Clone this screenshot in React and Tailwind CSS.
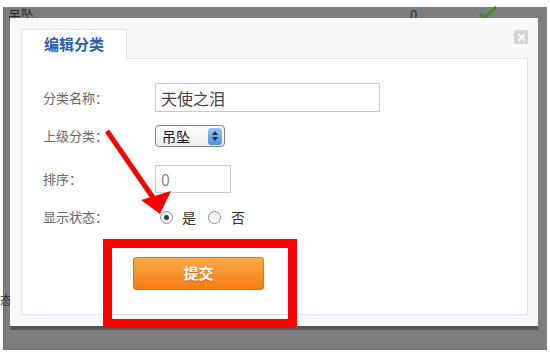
import React from 'react';

const font = { fontFamily: '"Noto Sans CJK SC", "Liberation Sans", sans-serif' };

function Radio({ checked }) {
  return (
    <span className="w-[13px] h-[13px] rounded-full border border-[#8a8f96] bg-gradient-to-b from-[#e9edf2] to-[#ffffff] flex items-center justify-center">
      {checked && <span className="w-[5px] h-[5px] rounded-full bg-[#1e3a5c]" />}
    </span>
  );
}

export default function App() {
  return (
    <div className="relative w-[550px] h-[357px] bg-white overflow-hidden" style={font}>
      {/* page behind the dialog */}
      <div className="h-[7px]" />
      <div className="ml-[3px] mr-[3px] h-[343px] bg-[#7d7d7d] border-l border-[#6a6a6a]">
        <div className="flex items-center h-[14px] text-[13px] leading-none text-[#2a2a2a]">
          <span className="ml-[4px]">吊坠</span>
          <span className="ml-[376px]">0</span>
          <svg className="ml-[62px] -mt-[2px]" width="18" height="14" viewBox="0 0 18 14">
            <path d="M1 8 L6 12 L17 1" fill="none" stroke="#3f8a1c" strokeWidth="3" />
          </svg>
        </div>
        <div className="mt-[273px] -ml-[4px] text-[12px] leading-none text-[#2a2a2a]">态</div>
      </div>

      {/* dialog */}
      <div className="absolute left-[10px] top-[18px] w-[528px] h-[312px] border-b-4 border-[#545454]">
        <div className="h-[308px] bg-[#f6f8f9] p-[11px] pr-[10px]">
          <div className="h-full flex flex-col bg-white border-l border-r border-b border-[#dbe3e6]">
            <div className="flex h-[30px]">
              <div className="w-[106px] -ml-px border-t border-l border-r border-[#dbe3e6] bg-white flex items-center justify-center text-[15px] font-bold text-[#2d5fa8]">
                编辑分类
              </div>
              <div className="flex-1 border-b border-[#dbe3e6] flex justify-end items-start bg-[#f6f8f9] -mr-px">
                <div className="w-[14px] h-[14px] mt-px bg-[#d6d6d6] flex items-center justify-center">
                  <svg width="9" height="9" viewBox="0 0 9 9">
                    <path d="M1.5 1.5 L7.5 7.5 M7.5 1.5 L1.5 7.5" stroke="#ffffff" strokeWidth="2.2" />
                  </svg>
                </div>
              </div>
            </div>

            <div className="pl-[21px] text-[13px] text-[#666]">
              <div className="flex items-center mt-[24px] h-[29px]">
                <span className="w-[112px]">分类名称：</span>
                <div className="w-[225px] h-[29px] border border-[#c9c9c9] flex items-center pl-[5px] text-[16px] text-[#444]">
                  天使之泪
                </div>
              </div>
              <div className="flex items-center mt-[13px] h-[22px]">
                <span className="w-[112px]">上级分类：</span>
                <div className="w-[70px] h-[22px] rounded-[4px] border border-[#7f7f7f] bg-gradient-to-b from-white to-[#eeeeee] flex items-center justify-between pl-[6px] pr-[2px] text-[14px] text-[#111]">
                  吊坠
                  <span className="w-[14px] h-[17px] rounded-[3px] bg-gradient-to-b from-[#9cc4f2] to-[#4c8ee0] flex flex-col items-center justify-center gap-[2px]">
                    <span className="w-0 h-0 border-l-[3px] border-r-[3px] border-b-[4px] border-l-transparent border-r-transparent border-b-[#1a2a44]" />
                    <span className="w-0 h-0 border-l-[3px] border-r-[3px] border-t-[4px] border-l-transparent border-r-transparent border-t-[#1a2a44]" />
                  </span>
                </div>
              </div>
              <div className="flex items-center mt-[18px] h-[28px]">
                <span className="w-[112px]">排序：</span>
                <div className="w-[76px] h-[28px] border border-[#c9c9c9] flex items-center pl-[5px] text-[16px] text-[#888]">
                  0
                </div>
              </div>
              <div className="flex items-center mt-[16px] h-[16px]">
                <span className="w-[117px]">显示状态：</span>
                <Radio checked />
                <span className="ml-[9px] text-[14px] text-[#333]">是</span>
                <span className="ml-[12px]"><Radio /></span>
                <span className="ml-[10px] text-[14px] text-[#333]">否</span>
              </div>
              <div className="mt-[32px] ml-[90px] w-[131px] h-[33px] rounded-[3px] border border-[#e07414] bg-gradient-to-b from-[#fcab45] to-[#f47b10] flex items-center justify-center text-[15px] font-bold text-white [text-shadow:0_1px_1px_rgba(150,60,0,0.5)]">
                提交
              </div>
            </div>
          </div>
        </div>
      </div>

      {/* annotations */}
      <div className="absolute left-[103px] top-[239px] w-[194px] h-[89px] border-[9px] border-[#ff0000]" />
      <svg className="absolute left-0 top-0" width="550" height="357" viewBox="0 0 550 357">
        <line x1="107" y1="131" x2="154" y2="199" stroke="#f40000" strokeWidth="5" />
        <polygon points="160,214 141,200 171,191" fill="#f40000" />
      </svg>
    </div>
  );
}
